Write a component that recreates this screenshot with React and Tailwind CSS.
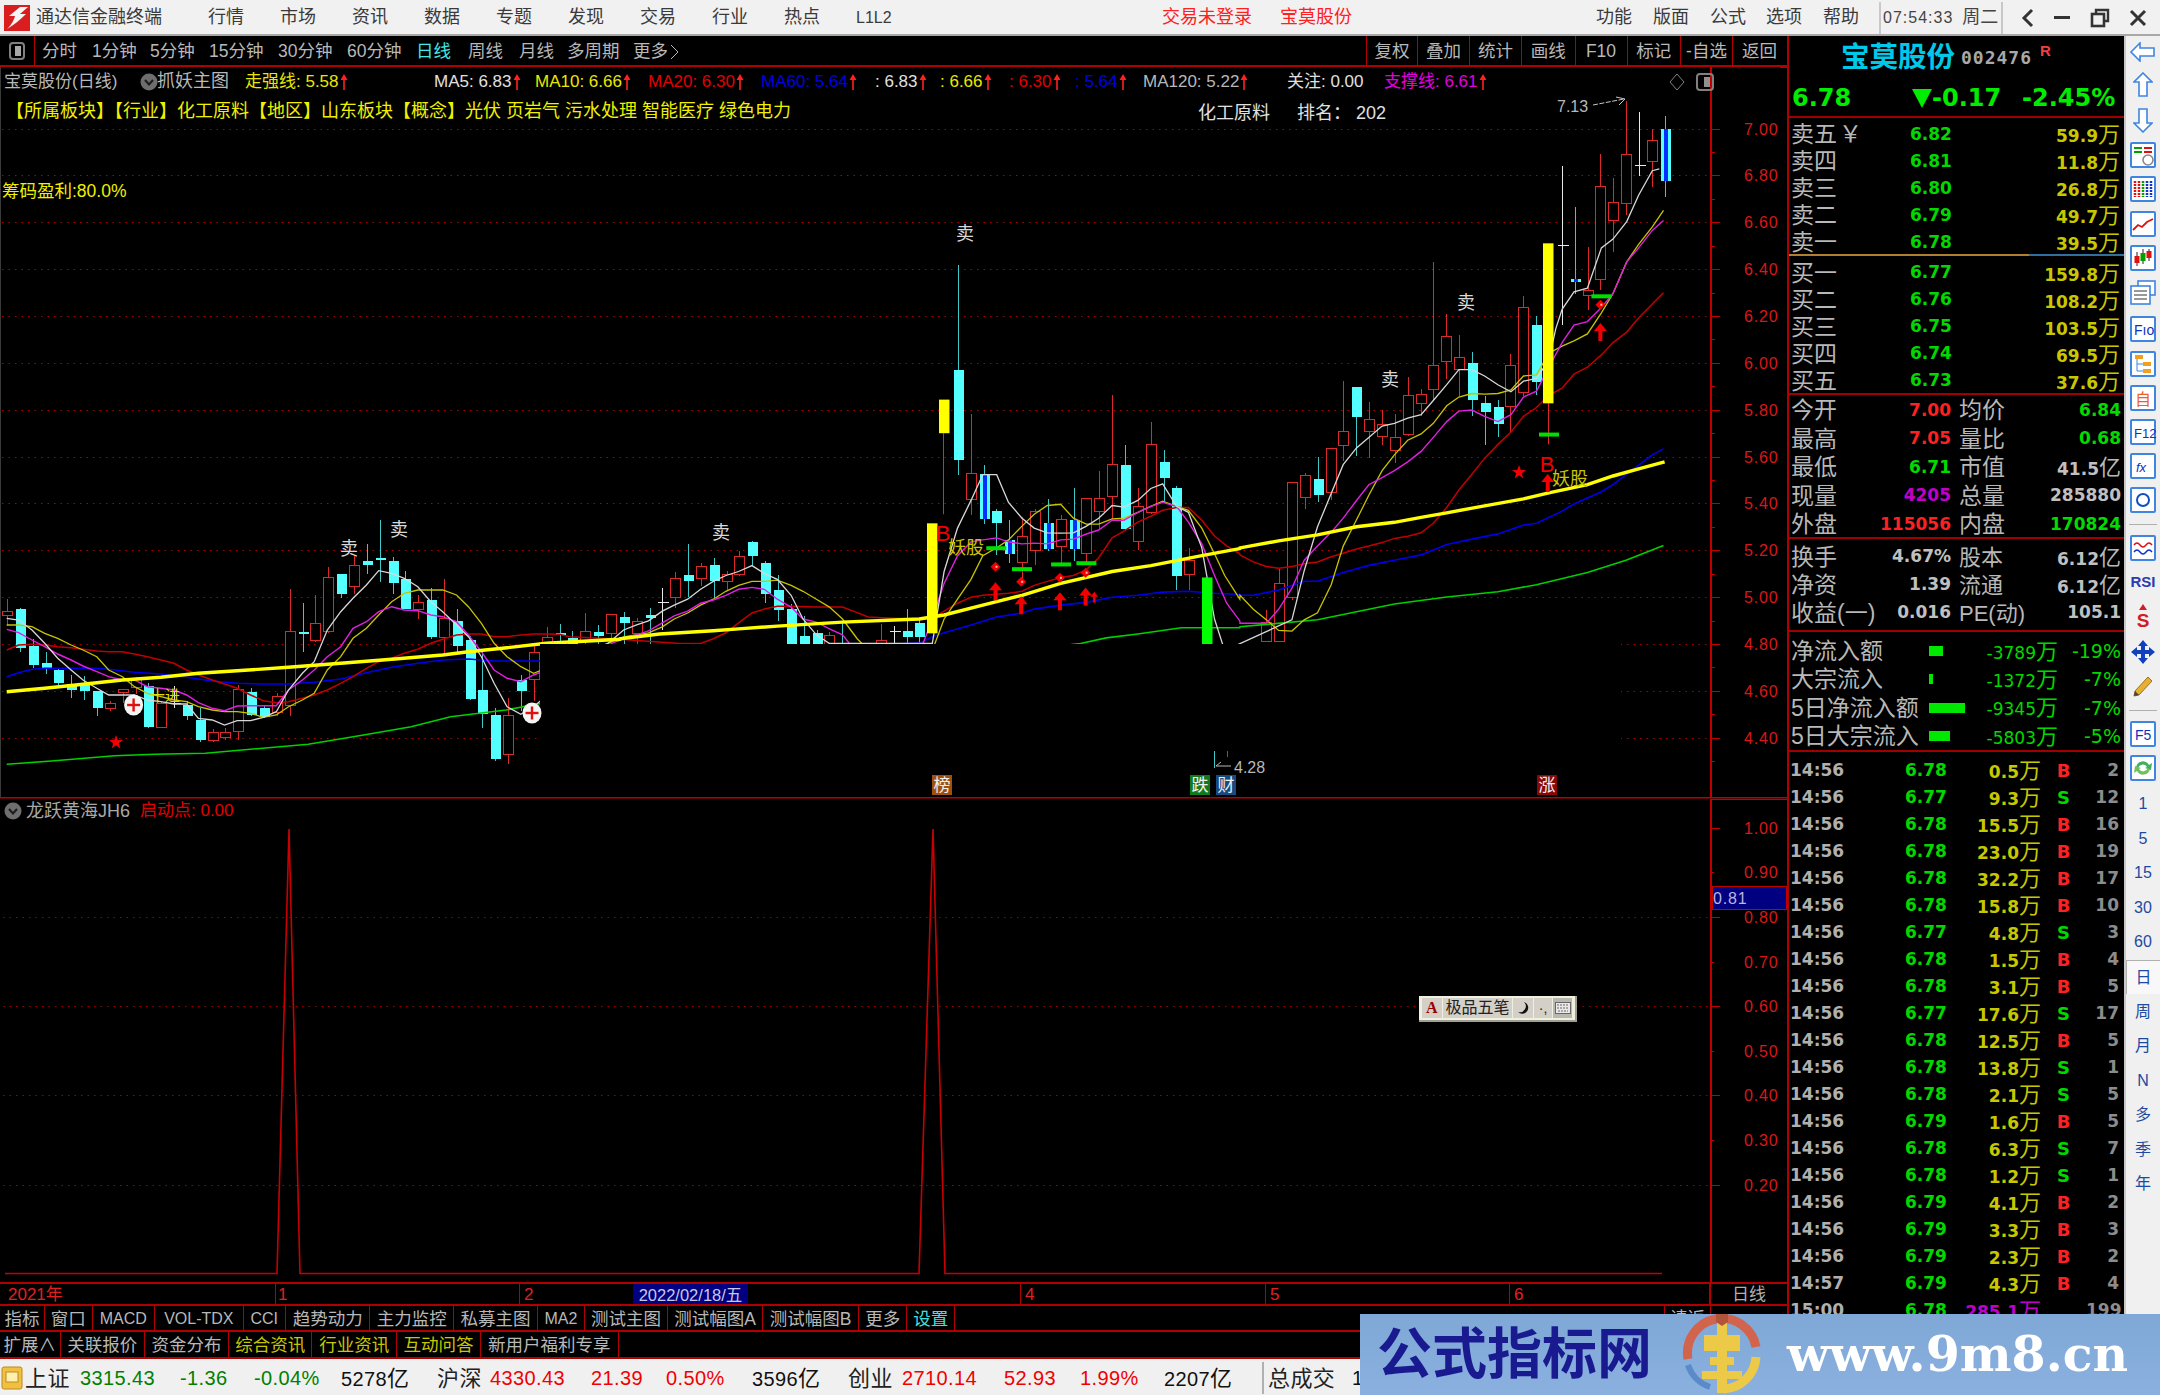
import React from 'react';

const z8 = (x, y) => [x / 2.53, 480 + y / 3];
const z9 = (x, y) => [620 + x / 2.53, 200 + y / 2.53];
const z10 = (x, y) => [1240 + x / 2.85, 90 + y / 2.85];

const c8 = [
  [0,'r',355,393,405,435],[1,'c',380,383,500,513],[2,'c',475,495,553,560],[3,'c',513,545,563,580],[4,'c',565,568,607,618],
  [5,'c',583,610,628,652],[6,'c',585,605,630,657],[7,'c',630,630,680,705],[8,'r',660,668,683,690],[9,'r',625,628,637,665],
  [10,'r',588,597,620,640],[11,'c',605,615,738,740],[12,'r',660,668,740,742],[13,'w',615,668,668,680],[14,'c',660,672,706,718],
  [15,'c',680,716,778,783],[16,'r',745,755,780,783],[17,'r',742,755,770,778],[18,'r',612,628,752,778],[19,'c',620,632,703,705],
  [20,'c',672,680,708,712],[21,'r',635,647,695,705],[22,'r',325,452,675,705],[23,'c',365,452,454,512],[24,'r',343,430,480,482],
  [25,'r',258,290,452,455],[26,'c',280,280,338,350],[27,'r',225,255,318,338],[28,'c',190,240,252,280],[29,'c',118,232,238,302],
  [30,'c',228,240,305,338],[31,'c',270,295,383,385],[32,'r',343,367,387,413],[33,'c',320,357,468,475],[34,'r',293,415,472,520],
  [35,'c',385,420,495,515],[36,'c',465,478,653,657],[37,'c',510,627,700,742],[38,'c',680,703,833,840],[39,'r',650,705,822,850],
  [40,'c',582,597,630,690],[41,'r',490,515,597,660],[42,'r',437,470,520,540],[43,'c',428,457,459,540],[44,'c',450,470,540,560],
  [45,'r',397,453,480,540],[46,'c',432,452,465,540],[47,'r',402,402,460,540],
];
const c9 = [
  [48,'c',1040,1052,1068,1120],[49,'r',1055,1065,1095,1125],[50,'c',1030,1048,1056,1125],[51,'w',978,1017,1017,1085],[52,'r',938,957,1005,1030],
  [53,'c',868,945,962,1003],[54,'r',915,927,957,975],[55,'c',903,922,962,1005],[56,'r',935,945,965,985],[57,'r',885,900,945,950],
  [58,'c',860,862,897,920],[59,'c',912,915,995,1018],[60,'c',945,985,1035,1062],[61,'c',1020,1032,1140,1150],[62,'c',1050,1100,1140,1150],
  [63,'c',1085,1092,1140,1150],[64,'r',1090,1100,1140,1150],[65,'c',1062,1120,1140,1150],[68,'r',1070,1112,1140,1150],[69,'w',1075,1090,1090,1125],
  [70,'c',1032,1088,1103,1125],[71,'c',1058,1068,1103,1125],[74,'c',163,428,655,692],[75,'r',540,690,757,795],
  [76,'b',668,690,805,817],[77,'c',778,785,815,895],[78,'b',808,857,893,915],[79,'r',800,850,917,960],[80,'r',780,787,885,920],
  [81,'b',755,815,880,885],[82,'r',795,808,875,917],[83,'b',725,808,880,912],[84,'r',755,755,893,920],[85,'r',682,755,787,830],
  [86,'r',492,668,748,805],[87,'c',618,668,830,832],[88,'r',725,775,862,882],[89,'r',558,618,790,792],[90,'c',630,660,700,760],
  [91,'c',720,725,950,985],[92,'r',877,912,945,985],
];
const c10 = [
  [98,'r',1480,1515,1570,1570],[99,'r',1362,1405,1570,1570],[100,'r',1118,1118,1445,1450],[101,'r',1088,1097,1160,1190],[102,'c',1043,1105,1150,1170],
  [103,'r',1020,1020,1145,1165],[104,'r',827,972,1012,1055],[105,'c',843,843,928,1040],[106,'r',885,938,972,1045],[107,'r',908,952,985,1008],
  [108,'r',920,990,1025,1060],[109,'r',815,870,980,983],[110,'r',850,867,892,925],[111,'r',488,785,852,880],[112,'r',635,700,772,820],
  [113,'r',695,760,795,868],[114,'c',745,775,880,925],[115,'c',868,890,915,1010],[116,'c',882,900,948,985],[117,'r',750,785,902,972],
  [118,'r',585,618,860,870],[119,'c',642,668,828,865],[121,'w',215,442,442,668],[122,'b',330,537,543,578],[123,'r',445,570,585,625],
  [124,'r',180,275,538,568],[125,'r',248,318,370,458],[126,'r',28,182,322,352],[127,'w',60,215,215,243],[128,'r',108,143,203,275],[129,'b',72,107,257,303],
];

const white = [
  ...[[17,415],[47,420],[81,450],[113,490],[146,535],[180,570],[210,600],[245,625],[275,645],[310,645],[340,645],[373,660],[407,665],[440,672],[472,672],[502,715],[537,720],[568,735],[600,722],[634,722],[666,712],[699,695],[730,630],[765,580],[795,545],[828,450],[862,395],[893,355],[927,315],[958,272],[991,280],[1023,295],[1057,320],[1090,365],[1120,395],[1155,435],[1185,470],[1218,530],[1250,610],[1283,680],[1318,703],[1350,680]].map(p => z8(...p)),
  ...[[9,1088],[42,1075],[72,1065],[107,1040],[137,1025],[171,1010],[204,985],[236,965],[268,950],[300,940],[334,925],[365,945],[398,960],[433,1000],[463,1060],[497,1100],[530,1122],[790,1122],[820,940],[854,830],[888,760],[918,695],[953,695],[983,765],[1017,805],[1048,830],[1081,842],[1115,843],[1147,842],[1180,825],[1211,805],[1245,773],[1275,777],[1310,760],[1343,730],[1373,718],[1408,775],[1438,790],[1472,880],[1504,1060],[1530,1140]].map(p => z9(...p)),
  ...[[148,1510],[183,1370],[221,1245],[260,1150],[294,1068],[332,1020],[367,990],[405,958],[440,950],[478,935],[516,925],[551,885],[589,840],[624,797],[661,797],[697,815],[735,840],[772,860],[808,830],[845,822],[880,770],[900,680],[918,625],[952,575],[990,565],[1030,450],[1063,425],[1102,375],[1136,300],[1175,230],[1195,225]].map(p => z10(...p)),
];
const yellow = [
  ...[[17,435],[47,435],[81,440],[113,460],[146,475],[180,495],[210,510],[245,530],[275,570],[310,590],[340,620],[373,640],[407,650],[440,660],[472,665],[502,680],[537,690],[568,695],[600,695],[634,700],[666,712],[699,705],[730,680],[765,660],[795,640],[828,570],[862,530],[893,475],[927,445],[958,405],[991,365],[1023,340],[1057,330],[1090,330],[1120,330],[1155,345],[1185,380],[1218,430],[1250,490],[1283,530],[1318,560],[1350,580]].map(p => z8(...p)),
  ...[[9,1105],[72,1095],[107,1080],[137,1060],[171,1045],[204,1025],[236,1010],[268,990],[300,975],[334,965],[365,965],[398,962],[433,975],[463,990],[497,1010],[530,1030],[563,1060],[600,1110],[630,1140],[790,1140],[820,1060],[854,1010],[888,960],[918,900],[953,880],[983,860],[1017,825],[1048,795],[1081,773],[1115,770],[1147,805],[1180,820],[1211,820],[1245,807],[1275,805],[1310,790],[1343,775],[1373,762],[1408,775],[1438,785],[1472,830],[1504,895],[1530,950],[1568,1010]].map(p => z9(...p)),
  ...[[0,1440],[38,1480],[75,1510],[110,1540],[148,1542],[183,1510],[221,1490],[260,1410],[294,1300],[332,1225],[367,1155],[405,1085],[440,1040],[478,998],[516,980],[551,950],[589,900],[624,875],[661,865],[697,867],[735,865],[772,855],[808,815],[845,812],[880,750],[918,730],[952,715],[990,695],[1030,635],[1063,580],[1102,490],[1136,440],[1175,390],[1207,343]].map(p => z10(...p)),
];
const magenta = [
  ...[[17,448],[47,458],[81,480],[113,500],[146,522],[180,540],[210,558],[245,575],[275,590],[310,600],[340,600],[373,620],[407,625],[440,630],[472,645],[502,668],[537,685],[568,692],[600,678],[634,677],[666,677],[699,677],[730,630],[765,600],[795,570],[828,530],[862,500],[893,445],[927,425],[958,395],[991,380],[1023,390],[1057,392],[1090,405],[1120,410],[1155,425],[1185,465],[1218,515],[1250,570],[1283,595],[1318,605],[1350,585]].map(p => z8(...p)),
  ...[[9,1110],[42,1100],[72,1090],[107,1070],[137,1052],[171,1040],[204,1020],[236,1012],[268,1000],[300,985],[334,980],[365,985],[398,1010],[433,1030],[463,1060],[497,1068],[530,1085],[563,1100],[595,1140],[760,1140],[790,1060],[820,970],[854,900],[888,865],[918,860],[953,855],[983,865],[1017,870],[1048,868],[1081,870],[1115,860],[1147,858],[1180,845],[1211,835],[1245,810],[1275,810],[1310,790],[1343,775],[1373,765],[1408,775],[1438,815],[1472,870],[1504,950],[1535,1020],[1568,1065]].map(p => z9(...p)),
  ...[[0,1520],[75,1520],[110,1480],[148,1420],[183,1340],[221,1300],[260,1260],[294,1220],[332,1170],[367,1125],[405,1105],[440,1085],[478,1060],[516,1030],[551,990],[589,945],[624,915],[661,912],[697,930],[735,945],[772,925],[808,875],[845,858],[880,790],[918,720],[952,670],[990,660],[1030,620],[1063,580],[1102,490],[1136,450],[1175,400],[1207,372]].map(p => z10(...p)),
];
const red = [
  ...[[17,510],[47,495],[81,493],[113,495],[146,500],[180,503],[210,508],[245,513],[275,515],[310,515],[340,522],[373,530],[407,540],[440,550],[472,570],[502,585],[537,600],[568,612],[600,625],[634,645],[666,662],[699,668],[730,665],[765,655],[795,645],[828,630],[862,610],[893,590],[927,565],[958,545],[991,535],[1023,520],[1057,508],[1090,490],[1120,478],[1155,465],[1185,462],[1218,462],[1250,470],[1283,470],[1318,465],[1350,462],[1382,462],[1415,463],[1440,470],[1568,478]].map(p => z8(...p)),
  ...[[150,1122],[204,1122],[236,1110],[268,1095],[300,1070],[334,1045],[365,1035],[398,1028],[433,1028],[497,1030],[563,1030],[595,1042],[628,1055],[690,1058],[757,1060],[790,1058],[820,1040],[854,1020],[888,1005],[918,1000],[983,995],[1017,990],[1048,975],[1081,965],[1115,955],[1147,950],[1180,935],[1211,905],[1245,855],[1275,838],[1310,815],[1343,800],[1373,785],[1408,778],[1438,778],[1472,810],[1504,850],[1535,875],[1568,895]].map(p => z9(...p)),
  ...[[0,1325],[38,1345],[75,1358],[110,1363],[148,1358],[183,1350],[221,1345],[260,1330],[294,1320],[332,1308],[367,1300],[405,1290],[440,1278],[478,1272],[516,1262],[551,1235],[589,1190],[624,1140],[661,1095],[697,1050],[735,1010],[772,975],[808,930],[845,905],[880,870],[918,850],[952,810],[990,790],[1030,755],[1063,720],[1102,690],[1136,650],[1175,610],[1207,578]].map(p => z10(...p)),
];
const blue = [
  ...[[17,590],[47,578],[81,568],[113,565],[180,565],[245,565],[275,568],[340,577],[407,582],[472,592],[537,603],[600,610],[666,612],[730,612],[795,607],[862,597],[927,578],[991,562],[1057,550],[1120,540],[1185,537],[1250,543],[1318,543],[1360,543]].map(p => z8(...p)),
  ...[[660,1125],[760,1120],[790,1105],[820,1095],[888,1075],[953,1055],[1017,1045],[1048,1035],[1115,1025],[1180,1018],[1245,1005],[1310,1000],[1373,992],[1438,990],[1504,995],[1568,998]].map(p => z9(...p)),
  ...[[0,1440],[38,1440],[110,1425],[183,1400],[221,1400],[294,1375],[367,1355],[440,1340],[516,1325],[589,1295],[661,1280],[735,1265],[808,1240],[845,1235],[918,1200],[952,1180],[1030,1145],[1063,1125],[1102,1095],[1175,1040],[1207,1023]].map(p => z10(...p)),
];
const thick = [
  ...[[17,635],[113,625],[210,613],[310,600],[407,592],[502,580],[600,572],[730,562],[862,550],[991,538],[1120,525],[1185,515],[1283,503],[1382,490],[1568,478]].map(p => z8(...p)),
  ...[[0,1110],[100,1098],[236,1090],[300,1085],[398,1078],[563,1068],[757,1060],[820,1050],[918,1025],[1017,1000],[1115,970],[1245,940],[1343,925],[1472,900],[1568,882]].map(p => z9(...p)),
  ...[[0,1305],[110,1285],[221,1268],[332,1245],[440,1232],[516,1218],[589,1205],[697,1185],[808,1165],[880,1148],[990,1125],[1063,1100],[1136,1080],[1210,1060]].map(p => z10(...p)),
];
const green = [
  ...[[17,853],[130,843],[290,827],[390,823],[520,820],[650,806],[780,793],[920,765],[1040,740],[1140,710],[1280,690],[1360,672]].map(p => z8(...p)),
  ...[[1100,1130],[1165,1122],[1230,1108],[1310,1098],[1420,1082],[1568,1082]].map(p => z9(...p)),
  ...[[0,1530],[221,1510],[440,1465],[589,1445],[735,1430],[845,1410],[990,1375],[1100,1340],[1207,1298]].map(p => z10(...p)),
];

const pts = a => a.map(p => p[0].toFixed(1) + ',' + p[1].toFixed(1)).join(' ');
const cx = i => Math.round(7 + 12.85 * i) + 0.5;

function Candle({ d, z }) {
  const [i, k, hi, top, bot, lo] = d;
  const x = cx(i);
  const Y = v => Math.round(z(0, v)[1]) + 0.5;
  const [yh, yt, yb, yl] = [Y(hi), Y(top), Y(bot), Y(lo)];
  if (k === 'r') return (
    <g stroke="#dc2a2a" fill="none" shapeRendering="crispEdges">
      <line x1={x} x2={x} y1={yh} y2={yt} />
      <line x1={x} x2={x} y1={yb} y2={yl} />
      <rect x={x - 5} y={yt} width={10} height={Math.max(yb - yt, 1)} fill="#000" />
    </g>
  );
  if (k === 'w') return (
    <g stroke="#e8e8e8" shapeRendering="crispEdges">
      <line x1={x} x2={x} y1={yh} y2={yl} />
      <line x1={x - 5} x2={x + 6} y1={yt} y2={yt} />
    </g>
  );
  return (
    <g shapeRendering="crispEdges">
      <line x1={x} x2={x} y1={yh} y2={yl} stroke="#3ec8c8" />
      <rect x={x - 5} y={yt} width={10.5} height={Math.max(yb - yt, 2)} fill="#54ffff" />
      {k === 'b' && <rect x={x - 2} y={yt} width={4} height={Math.max(yb - yt, 2)} fill="#0030ff" />}
    </g>
  );
}

const Arrow = ({ x, y, s = 1 }) => (
  <polygon
    points={`${x},${y - 9 * s} ${x + 6.5 * s},${y - 1 * s} ${x + 2 * s},${y - 1 * s} ${x + 2 * s},${y + 9 * s} ${x - 2 * s},${y + 9 * s} ${x - 2 * s},${y - 1 * s} ${x - 6.5 * s},${y - 1 * s}`}
    fill="#f00000"
  />
);
const Diamond = ({ x, y }) => (
  <g>
    <polygon points={`${x},${y - 5} ${x + 5},${y} ${x},${y + 5} ${x - 5},${y}`} fill="#f00000" />
    <rect x={x} y={y - 1} width={2} height={2} fill="#ffb0b0" />
  </g>
);
const Star = ({ x, y }) => (
  <polygon
    points={`${x},${y - 7} ${x + 1.8},${y - 2} ${x + 7},${y - 2} ${x + 2.8},${y + 1.2} ${x + 4.3},${y + 6.5} ${x},${y + 3.3} ${x - 4.3},${y + 6.5} ${x - 2.8},${y + 1.2} ${x - 7},${y - 2} ${x - 1.8},${y - 2}`}
    fill="#f00000"
  />
);
const Plus = ({ x, y }) => (
  <g>
    <ellipse cx={x} cy={y} rx={9.5} ry={10.5} fill="#f4f4f4" />
    <rect x={x - 6.5} y={y - 1.2} width={13} height={2.4} fill="#e01010" />
    <rect x={x - 1.2} y={y - 6.5} width={2.4} height={13} fill="#e01010" />
  </g>
);
const Badge = ({ x, t, bg }) => (
  <g>
    <rect x={x - 10} y={775} width={20} height={20} fill={bg} />
    <text x={x} y={791} textAnchor="middle" fontSize="17" fill="#f0f0f0">{t}</text>
  </g>
);

function MainChart() {
  const grid = [];
  for (let k = 0; k < 14; k++) grid.push(7 - k * 0.2);
  const yp = p => 128.6 + (7 - p) * 234.3;
  const flat = [z9(952, 881), z9(1017, 934), z9(1116, 922), z9(1180, 919), z10(1030, 588)];
  return (
    <svg className="absolute inset-0" width="1787" height="730" viewBox="0 67 1787 730">
      <line x1="0.5" x2="0.5" y1="67" y2="797" stroke="#3a3a3a" />
      {grid.map(p => (
        <line key={p} x1="2" x2="1710" y1={Math.round(yp(p)) + 0.5} y2={Math.round(yp(p)) + 0.5} stroke="#b00000" strokeDasharray="1.5 5" />
      ))}
      {c8.map(d => <Candle key={d[0]} d={d} z={z8} />)}
      {c9.map(d => <Candle key={d[0]} d={d} z={z9} />)}
      {c10.map(d => <Candle key={d[0]} d={d} z={z10} />)}
      <polyline points={pts(green)} fill="none" stroke="#00d000" strokeWidth="1.6" />
      <polyline points={pts(blue)} fill="none" stroke="#0000e8" strokeWidth="1.6" />
      <polyline points={pts(red)} fill="none" stroke="#c00000" strokeWidth="1.5" />
      <polyline points={pts(yellow)} fill="none" stroke="#c8c400" strokeWidth="1.3" />
      <polyline points={pts(magenta)} fill="none" stroke="#e020e0" strokeWidth="1.4" />
      <polyline points={pts(white)} fill="none" stroke="#d8d8d8" strokeWidth="1.3" />
      <polyline points={pts(thick)} fill="none" stroke="#ffff00" strokeWidth="3.4" />
      <rect x={927} y={z9(0, 818)[1]} width={10.5} height={110} fill="#ffff00" />
      <line x1="943.5" x2="943.5" y1={z9(0, 590)[1]} y2={z9(0, 795)[1]} stroke="#dc2a2a" />
      <rect x={939} y={z9(0, 505)[1]} width={10.5} height={33.6} fill="#ffff00" />
      <rect x={1202} y={z9(0, 955)[1]} width={10.5} height={70} fill="#00ff00" />
      <line x1="1548.5" x2="1548.5" y1={z10(0, 892)[1]} y2={z10(0, 1010)[1]} stroke="#dc2a2a" />
      <rect x={1543} y={z10(0, 437)[1]} width={10.5} height={160} fill="#ffff00" />
      {flat.map((p, i) => <rect key={i} x={p[0] - 10} y={p[1] - 2} width={20} height={4} fill="#00e000" />)}
      <rect x={1539} y={z10(0, 982)[1] - 2} width={20} height={4} fill="#00e000" />
      <rect x="540" y="644" width="1081" height="107" fill="#000" />
      {[[349, 555], [399, 536], [965, 240], [721, 539], [1466, 309], [1390, 386]].map((p, i) => (
        <text key={i} x={p[0]} y={p[1]} textAnchor="middle" fontSize="18" fill="#d8d8d8">卖</text>
      ))}
      <text x="150" y="701" fontSize="15" fill="#e0e000">十进</text>
      <Plus x={133.6} y={705} />
      <Plus x={532} y={713} />
      <Star x={116} y={742} />
      <Star x={1519} y={472} />
      <text x="943" y="541" textAnchor="middle" fontSize="22" fill="#f00000">B</text>
      <text x="948" y="554" fontSize="18" fill="#c8c800">妖股</text>
      <text x="1547" y="472" textAnchor="middle" fontSize="22" fill="#f00000">B</text>
      <text x="1552" y="485" fontSize="18" fill="#c8c800">妖股</text>
      {[z9(950, 928), z9(1015, 966), z9(1113, 956), z9(1178, 943), z10(1027, 612)].map((p, i) => <Diamond key={i} x={p[0]} y={p[1]} />)}
      {[z9(950, 990), z9(1015, 1025), z9(1113, 1015), z9(1178, 1003), z10(1027, 690), z10(877, 1120)].map((p, i) => <Arrow key={i} x={p[0]} y={p[1]} />)}
      <Arrow x={z9(1200, 0)[0]} y={z9(0, 1005)[1]} s={0.6} />
      <text x="1557" y="112" fontSize="16" fill="#b8b8b8">7.13</text>
      <polyline points="1593,105 1624,99" fill="none" stroke="#c8c8c8" strokeDasharray="5 1.5" />
      <polyline points="1616,97 1625,99 1619,105" fill="none" stroke="#c8c8c8" />
      <line x1="1214.5" x2="1214.5" y1="751" y2="768" stroke="#3ec8c8" />
      <line x1="1227.5" x2="1227.5" y1="751" y2="757" stroke="#dc2a2a" />
      <polyline points="1231,766 1216,766 1221,762" fill="none" stroke="#b8b8b8" />
      <text x="1234" y="773" fontSize="16" fill="#b8b8b8">4.28</text>
      <Badge x={942} t="榜" bg="#a0500e" />
      <Badge x={1200} t="跌" bg="#137a1c" />
      <Badge x={1226} t="财" bg="#174a80" />
      <Badge x={1547} t="涨" bg="#880808" />
      <line x1="1711" x2="1711" y1="67" y2="797" stroke="#c00000" strokeWidth="2" />
      {grid.map(p => (
        <g key={p}>
          <line x1="1711" x2="1720" y1={Math.round(yp(p)) + 0.5} y2={Math.round(yp(p)) + 0.5} stroke="#c00000" />
          <line x1="1711" x2="1715" y1={Math.round(yp(p - 0.1)) + 0.5} y2={Math.round(yp(p - 0.1)) + 0.5} stroke="#c00000" />
          <text x="1744" y={yp(p) + 6} fontSize="16" letterSpacing="0.8" fill="#d81818">{p.toFixed(2)}</text>
        </g>
      ))}
      <line x1="1780" x2="1787" y1="67.5" y2="67.5" stroke="#c00000" />
    </svg>
  );
}

function SubChart() {
  const vals = [1, 0.9, 0.8, 0.7, 0.6, 0.5, 0.4, 0.3, 0.2];
  const yv = v => 827.7 + (1 - v) * 446;
  return (
    <svg className="absolute inset-0" width="1787" height="485" viewBox="0 797 1787 485">
      {[0.8, 0.6, 0.4, 0.2].map(v => (
        <line key={v} x1="3" x2="1710" y1={Math.round(yv(v)) + 0.5} y2={Math.round(yv(v)) + 0.5} stroke="#a00000" strokeDasharray="1.5 5" />
      ))}
      <polyline points="5,1273.5 277,1273.5 289,829 300,1273.5 919,1273.5 933,829 945,1273.5 1662,1273.5" fill="none" stroke="#c80000" strokeWidth="1.6" />
      <line x1="0" x2="1787" y1="797.5" y2="797.5" stroke="#c00000" strokeWidth="2" />
      <line x1="1711" x2="1711" y1="799" y2="1282" stroke="#c00000" strokeWidth="2" />
      <line x1="1711" x2="1787" y1="799.5" y2="799.5" stroke="#c00000" />
      {vals.map((v, i) => (
        <g key={v}>
          <line x1="1711" x2={i % 2 ? 1714 : 1720} y1={Math.round(yv(v)) + 0.5} y2={Math.round(yv(v)) + 0.5} stroke="#c00000" />
          <text x="1744" y={yv(v) + 6} fontSize="16" letterSpacing="0.8" fill="#d81818">{v.toFixed(2)}</text>
        </g>
      ))}
      <rect x="1712.5" y="886.5" width="74" height="23" fill="#000080" stroke="#c00000" />
      <text x="1713" y="904" fontSize="16" letterSpacing="0.8" fill="#b8b8e0">0.81</text>
    </svg>
  );
}

const UpTick = ({ c = '#ff2020' }) => (
  <svg width="8" height="17" viewBox="0 0 8 17" className="ml-[1px] shrink-0">
    <path d="M4 1 L7.5 7 H4.8 V17 H3.2 V7 H0.5 Z" fill={c} />
  </svg>
);
const Chev = () => (
  <svg width="18" height="18" viewBox="0 0 18 18" className="shrink-0">
    <circle cx="9" cy="9" r="8.5" fill="#6e6e6e" />
    <path d="M5 7 L9 11.5 L13 7" stroke="#1c1c1c" strokeWidth="2" fill="none" />
  </svg>
);

const tf = [['分时', 50], ['1分钟', 58], ['5分钟', 59], ['15分钟', 69], ['30分钟', 69], ['60分钟', 69], ['日线', 52], ['周线', 51], ['月线', 48], ['多周期', 66]];
const rightBtns = [['复权', 51], ['叠加', 52], ['统计', 52], ['画线', 53.5], ['F10', 52], ['标记', 53.5], ['-自选', 52], ['返回', 54]];
const maRow = [
  ['MA5: 6.83', 101, 'text-[#e0e0e0]'], ['MA10: 6.66', 113, 'text-[#e8e800]'], ['MA20: 6.30', 113, 'text-[#e00000]'],
  ['MA60: 5.64', 114, 'text-[#0000e0]'], [': 6.83', 65, 'text-[#e0e0e0]'], [': 6.66', 69, 'text-[#e8e800]'],
  [': 6.30', 66, 'text-[#e00000]'], [': 5.64', 68, 'text-[#0000e0]'], ['MA120: 5.22', 144, 'text-[#b8b8b8]'],
];
const tabs1 = [['指标', 45], ['窗口', 47.5], ['MACD', 62.5], ['VOL-TDX', 88.6], ['CCI', 42.4], ['趋势动力', 84.5], ['主力监控', 83.5], ['私募主图', 84], ['MA2', 47], ['测试主图', 83], ['测试幅图A', 95], ['测试幅图B', 96], ['更多', 48.5], ['设置', 47.5, 'text-[#40e0e0]']];
const tabs2 = [['扩展∧', 60.6], ['关联报价', 84.4], ['资金分布', 84], ['综合资讯', 83.5, 'text-[#c8c800]'], ['行业资讯', 84.5, 'text-[#c8c800]'], ['互动问答', 84, 'text-[#c8c800]'], ['新用户福利专享', 137.6]];
const sells = [['卖五', '6.82', '59.9'], ['卖四', '6.81', '11.8'], ['卖三', '6.80', '26.8'], ['卖二', '6.79', '49.7'], ['卖一', '6.78', '39.5']];
const buys = [['买一', '6.77', '159.8'], ['买二', '6.76', '108.2'], ['买三', '6.75', '103.5'], ['买四', '6.74', '69.5'], ['买五', '6.73', '37.6']];
const R = 'text-[#ff2020]', G = 'text-[#00dc00]', W = 'text-[#c0c0c0]', M = 'text-[#c000c8]';
const stats1 = [
  ['今开', '7.00', R, '均价', '6.84', G], ['最高', '7.05', R, '量比', '0.68', G], ['最低', '6.71', G, '市值', '41.5', W, '亿'],
  ['现量', '4205', M, '总量', '285880', W], ['外盘', '115056', R, '内盘', '170824', G],
];
const stats2 = [['换手', '4.67%', W, '股本', '6.12', W, '亿'], ['净资', '1.39', W, '流通', '6.12', W, '亿'], ['收益(一)', '0.016', W, 'PE(动)', '105.1', W]];
const flows = [['净流入额', 14, '-3789', '-19%'], ['大宗流入', 4, '-1372', '-7%'], ['5日净流入额', 36, '-9345', '-7%'], ['5日大宗流入', 21, '-5803', '-5%']];
const trades = [
  ['14:56', '6.78', '0.5', 'B', '2'], ['14:56', '6.77', '9.3', 'S', '12'], ['14:56', '6.78', '15.5', 'B', '16'], ['14:56', '6.78', '23.0', 'B', '19'],
  ['14:56', '6.78', '32.2', 'B', '17'], ['14:56', '6.78', '15.8', 'B', '10'], ['14:56', '6.77', '4.8', 'S', '3'], ['14:56', '6.78', '1.5', 'B', '4'],
  ['14:56', '6.78', '3.1', 'B', '5'], ['14:56', '6.77', '17.6', 'S', '17'], ['14:56', '6.78', '12.5', 'B', '5'], ['14:56', '6.78', '13.8', 'S', '1'],
  ['14:56', '6.78', '2.1', 'S', '5'], ['14:56', '6.79', '1.6', 'B', '5'], ['14:56', '6.78', '6.3', 'S', '7'], ['14:56', '6.78', '1.2', 'S', '1'],
  ['14:56', '6.79', '4.1', 'B', '2'], ['14:56', '6.79', '3.3', 'B', '3'], ['14:56', '6.79', '2.3', 'B', '2'], ['14:57', '6.79', '4.3', 'B', '4'],
  ['15:00', '6.78', '285.1', '', '199'],
];
const status = [
  ['3315.43', 100, 'text-[#008000]'], ['-1.36', 74, 'text-[#008000]'], ['-0.04%', 87, 'text-[#008000]'], ['5278', 96, 'text-[#111]', '亿'], ['沪深', 53, 'text-[#222] text-[22px]'],
  ['4330.43', 101, 'text-[#f00000]'], ['21.39', 75, 'text-[#f00000]'], ['0.50%', 86, 'text-[#f00000]'], ['3596', 96, 'text-[#111]', '亿'], ['创业', 54, 'text-[#222] text-[22px]'],
  ['2710.14', 102, 'text-[#f00000]'], ['52.93', 76, 'text-[#f00000]'], ['1.99%', 84, 'text-[#f00000]'], ['2207', 98, 'text-[#111]', '亿'],
];

const num = "font-['DejaVu_Sans','Noto_Sans_CJK_SC',sans-serif] font-bold text-[17px]";

const Frame = ({ children }) => (
  <svg width="28" height="28" viewBox="0 0 28 28">
    <rect x="2" y="2" width="24" height="24" fill="#fff" stroke="#3f86e0" strokeWidth="2" rx="1" />
    {children}
  </svg>
);
const railIcons = [
  { h: 31, el: <svg width="26" height="20" viewBox="0 0 26 20"><path d="M1 10 L10 1 V6 H24 V14 H10 V19 Z" fill="#fff" stroke="#3f86e0" strokeWidth="1.6" /></svg> },
  { h: 35, el: <svg width="20" height="26" viewBox="0 0 20 26"><path d="M10 1 L19 10 H14 V24 H6 V10 H1 Z" fill="#fff" stroke="#3f86e0" strokeWidth="1.6" /></svg> },
  { h: 36, el: <svg width="20" height="26" viewBox="0 0 20 26"><path d="M10 25 L19 16 H14 V2 H6 V16 H1 Z" fill="#fff" stroke="#3f86e0" strokeWidth="1.6" /></svg> },
  { h: 34, el: <Frame><path d="M5 7 H13 M5 11 H13" stroke="#00a000" strokeWidth="2" /><path d="M15 7 H23 M15 11 H23" stroke="#e01010" strokeWidth="2" /><circle cx="19" cy="19" r="5" fill="none" stroke="#888" strokeWidth="1.6" /></Frame> },
  { h: 34, el: <Frame><path d="M6 6 V22 M10 6 V22" stroke="#e01010" strokeWidth="2.5" strokeDasharray="2 1" /><path d="M14 6 V22" stroke="#00a000" strokeWidth="2.5" strokeDasharray="2 1" /><path d="M18 6 V22 M22 6 V22" stroke="#1030d0" strokeWidth="2.5" strokeDasharray="2 1" /></Frame> },
  { h: 35, el: <Frame><path d="M4 20 L9 15 L13 17 L18 12 L24 9" fill="none" stroke="#e01010" strokeWidth="1.8" /></Frame> },
  { h: 34, el: <Frame><path d="M8 8 V22 M14 5 V20 M20 5 V17" stroke="#222" /><rect x="5.5" y="12" width="5" height="7" fill="#e01010" /><rect x="11.5" y="9" width="5" height="8" fill="#00a000" /><rect x="17.5" y="7" width="5" height="7" fill="#e01010" /></Frame> },
  { h: 36, el: <svg width="28" height="28" viewBox="0 0 28 28"><rect x="9" y="2" width="17" height="14" fill="#fff" stroke="#3f86e0" strokeWidth="1.6" /><rect x="2" y="7" width="19" height="18" fill="#fff" stroke="#3f86e0" strokeWidth="1.6" /><path d="M5 12 H18 M5 16 H18 M5 20 H18" stroke="#777" strokeWidth="1.6" /></svg> },
  { h: 35, el: <Frame><text x="5" y="20" fontSize="14" fill="#1030c0">Fıo</text></Frame> },
  { h: 35, el: <Frame><rect x="6" y="5" width="8" height="4" fill="#f0a020" /><rect x="14" y="12" width="8" height="4" fill="#f0a020" /><rect x="14" y="19" width="8" height="4" fill="#f0a020" /><path d="M8 9 V21 H14 M8 14 H14" fill="none" stroke="#3f86e0" /></Frame> },
  { h: 34, el: <Frame><text x="6" y="21" fontSize="16" fill="#f06020">自</text></Frame> },
  { h: 34, el: <Frame><text x="5" y="20" fontSize="13" fill="#1030c0">F12</text></Frame> },
  { h: 34, el: <Frame><text x="7" y="20" fontSize="13" fontStyle="italic" fill="#1030c0">fx</text></Frame> },
  { h: 34, el: <Frame><circle cx="14" cy="14" r="6" fill="none" stroke="#1050c0" strokeWidth="2" /></Frame> },
  { h: 14, el: <div className="w-[28px] h-[1px] bg-[#b0b0b0]" /> },
  { h: 34, el: <Frame><path d="M5 11 q3 -4 6 0 t6 0 t6 0" fill="none" stroke="#e01010" strokeWidth="1.4" /><path d="M5 18 q3 -4 6 0 t6 0 t6 0" fill="none" stroke="#1030d0" strokeWidth="1.4" /></Frame> },
  { h: 34, el: <span className="text-[15px] font-bold text-[#2a3ab0]">RSI</span> },
  { h: 36, el: <svg width="24" height="28" viewBox="0 0 24 28"><text x="12" y="24" textAnchor="middle" fontSize="19" fontWeight="bold" fill="#d02020">S</text><path d="M12 1 L16 7 H8 Z" fill="#d02020" /></svg> },
  { h: 34, el: <svg width="26" height="26" viewBox="0 0 26 26"><path d="M13 1 L18 7 H15 V11 H19 V8 L25 13 L19 18 V15 H15 V19 H18 L13 25 L8 19 H11 V15 H7 V18 L1 13 L7 8 V11 H11 V7 H8 Z" fill="#1040c0" /></svg> },
  { h: 34, el: <svg width="24" height="24" viewBox="0 0 24 24"><path d="M4 17 L17 3 L21 7 L8 21 L3 22 Z" fill="#e8b030" stroke="#a07020" /><path d="M3 22 L4 17 L8 21 Z" fill="#444" /></svg> },
  { h: 14, el: <div className="w-[28px] h-[1px] bg-[#b0b0b0]" /> },
  { h: 34, el: <Frame><text x="6" y="20" fontSize="14" fill="#1030c0">F5</text></Frame> },
  { h: 34, el: <Frame><path d="M7 13 A7 7 0 0 1 20 11 L23 9 L22 16 L16 14 L18 13 A5 5 0 0 0 9 14 Z" fill="#40b060" /><path d="M21 15 A7 7 0 0 1 8 17 L5 19 L6 12 L12 14 L10 15 A5 5 0 0 0 19 14 Z" fill="#70c060" /></Frame> },
];
const railText = ['1', '5', '15', '30', '60', '日', '周', '月', 'N', '多', '季', '年'];

export default function App() {
  return (
    <div className="relative w-[2160px] h-[1395px] overflow-hidden bg-black flex flex-col font-['Liberation_Sans','Noto_Sans_CJK_SC',sans-serif]">
      <div className="h-[36px] shrink-0 bg-[#f1f1f1] border-b-2 border-[#a8a8a8] flex items-center pt-[1px] text-[18px] text-[#3a3a3a]">
        <svg width="26" height="26" viewBox="0 0 26 26" className="ml-[4px] mr-[6px] shrink-0">
          <rect width="26" height="26" fill="#d81e1e" />
          <path d="M3 24 C8 19 10 15 11 11 L5 11 L16 2 L24 2 L16 9 L22 9 C16 15 10 20 3 24 Z" fill="#f4f4f4" />
        </svg>
        <span className="w-[172px] shrink-0">通达信金融终端</span>
        {['行情', '市场', '资讯', '数据', '专题', '发现', '交易', '行业', '热点'].map(t => <span key={t} className="w-[72px] shrink-0">{t}</span>)}
        <span className="w-[306px] shrink-0 text-[16px]">L1L2</span>
        <span className="w-[118px] shrink-0 text-[#ff2020]">交易未登录</span>
        <span className="w-[316px] shrink-0 text-[#ff2020]">宝莫股份</span>
        {[['功能', 57], ['版面', 57], ['公式', 56], ['选项', 57], ['帮助', 56]].map(([t, w]) => <span key={t} style={{ width: w }} className="shrink-0">{t}</span>)}
        <div className="h-[32px] w-[124px] shrink-0 border-x-2 border-[#c8c8c8] flex items-center pl-[2px] text-[#444] gap-[9px]">
          <span className="text-[16px] tracking-[1px]">07:54:33</span><span className="text-[18px]">周二</span>
        </div>
        <div className="flex-1 flex items-center justify-around pl-[8px] pr-[3px]">
          <svg width="14" height="20" viewBox="0 0 14 20"><path d="M11 2 L3 10 L11 18" fill="none" stroke="#333" strokeWidth="3" /></svg>
          <svg width="16" height="4" viewBox="0 0 16 4"><rect width="16" height="3" fill="#333" /></svg>
          <svg width="20" height="20" viewBox="0 0 20 20"><path d="M6 5 V2 H18 V13 H14" fill="none" stroke="#333" strokeWidth="2.4" /><rect x="2" y="6" width="12" height="12" fill="none" stroke="#333" strokeWidth="2.6" /></svg>
          <svg width="18" height="18" viewBox="0 0 18 18"><path d="M2 2 L16 16 M16 2 L2 16" stroke="#333" strokeWidth="3" /></svg>
        </div>
      </div>

      <div className="flex h-[1323px] shrink-0">
        <div className="w-[1787px] shrink-0 flex flex-col">
          <div className="h-[31px] shrink-0 border-b-2 border-[#b00000] flex items-stretch text-[17.5px] text-[#b8b8b8]">
            <div className="w-[35px] shrink-0 border-r border-[#b00000] flex items-center justify-center">
              <svg width="16" height="18" viewBox="0 0 16 18"><rect x="1" y="1" width="14" height="16" rx="3" fill="none" stroke="#808080" strokeWidth="2" /><rect x="6" y="4" width="6" height="10" fill="#a8a8a8" /></svg>
            </div>
            <div className="w-[7px] shrink-0" />
            {tf.map(([t, w]) => <div key={t} style={{ width: w }} className={`shrink-0 pt-[2px] flex items-center ${t === '日线' ? 'text-[#40e8e8]' : ''}`}>{t}</div>)}
            <div className="w-[56px] shrink-0 pt-[2px] flex items-center gap-[2px]">更多
              <svg width="9" height="16" viewBox="0 0 9 16"><path d="M1 1 L8 8 L1 15" fill="none" stroke="#b8b8b8" /></svg>
            </div>
            <div className="flex-1" />
            <div className="w-[421px] flex shrink-0">
              {rightBtns.map(([t, w]) => <div key={t} style={{ width: w }} className="shrink-0 pt-[2px] border-l border-[#b00000] flex items-center justify-center">{t}</div>)}
            </div>
          </div>

          <div className="relative h-[730px] shrink-0">
            <MainChart />
            <div className="relative h-[29px] flex items-center text-[17px] text-[#b8b8b8]">
              <span className="pl-[4px] w-[145px] shrink-0">宝莫股份(日线)</span>
              <div className="w-[12px] shrink-0 -ml-[5px] mr-[5px]"><Chev /></div>
              <span className="w-[88px] shrink-0 text-[18px]">抓妖主图</span>
              <span className="w-[189px] shrink-0 text-[#e8e800] flex items-center">走强线: 5.58<UpTick /></span>
              {maRow.map(([t, w, c]) => <span key={t + w} style={{ width: w }} className={`shrink-0 flex items-center ${c}`}>{t}<UpTick /></span>)}
              <span className="w-[97px] shrink-0 text-[#e0e0e0]">关注: 0.00</span>
              <span className="w-[285px] shrink-0 text-[#e000e0] flex items-center">支撑线: 6.61<UpTick /></span>
              <svg width="16" height="18" viewBox="0 0 16 18" className="shrink-0 mr-[11px]"><path d="M8 1 L15 9 L8 17 L1 9 Z" fill="none" stroke="#808080" /></svg>
              <svg width="18" height="18" viewBox="0 0 18 18" className="shrink-0"><rect x="1" y="1" width="16" height="16" rx="3" fill="none" stroke="#808080" strokeWidth="2" /><rect x="8" y="4" width="6" height="10" fill="#909090" /></svg>
            </div>
            <div className="relative h-[29px] mt-[1px] flex items-center text-[18px] text-[#f0f000] pl-[6px]">
              <span className="w-[1192px] shrink-0">【所属板块】【行业】化工原料【地区】山东板块【概念】光伏 页岩气 污水处理 智能医疗 绿色电力</span>
              <span className="w-[99px] shrink-0 text-[#e0e0e0] pt-[3px]">化工原料</span>
              <span className="text-[#e0e0e0] pt-[3px]">排名： 202</span>
            </div>
            <div className="relative mt-[52px] pl-[2px] h-[26px] flex items-center text-[17.5px] text-[#f0f000]">筹码盈利:80.0%</div>
          </div>

          <div className="relative h-[485px] shrink-0">
            <SubChart />
            <div className="relative h-[26px] mt-[1px] flex items-center text-[17px] pl-[4px]">
              <Chev />
              <span className="ml-[4px] w-[114px] shrink-0 text-[#a8a8a8] text-[18px]">龙跃黄海JH6</span>
              <span className="text-[#e00000] text-[17px]">启动点: 0.00</span>
            </div>
            <div className="absolute left-[1419px] top-[199px] w-[158px] h-[26px] bg-[#f0f0e0] border-r-2 border-b-2 border-[#a0a090] flex items-center gap-[1px] pl-[3px] pr-[3px] text-[14px] text-[#222]">
              <div className="w-[20px] h-[20px] bg-[#d4d0c8] flex items-center justify-center font-['Liberation_Serif',serif] font-bold text-[#9a0000] text-[16px]">A</div>
              <div className="w-[71px] h-[20px] bg-[#d4d0c8] flex items-center justify-center whitespace-nowrap text-[16px]">极品五笔</div>
              <div className="w-[20px] h-[20px] bg-[#d4d0c8] flex items-center justify-center">
                <svg width="14" height="14" viewBox="0 0 14 14"><path d="M8 1 A6 6 0 1 1 2 11 A6 6 0 0 0 8 1 Z" fill="#111" /></svg>
              </div>
              <div className="w-[19px] h-[20px] bg-[#d4d0c8] flex items-center justify-center">·,</div>
              <div className="w-[19px] h-[20px] bg-[#b8b8b0] flex items-center justify-center">
                <svg width="16" height="12" viewBox="0 0 16 12"><rect x="0.5" y="0.5" width="15" height="11" fill="#e8e8e8" stroke="#666" /><path d="M2 3 H14 M2 6 H14 M3 9 H13" stroke="#666" strokeDasharray="2 1" /></svg>
              </div>
            </div>
          </div>

          <div className="h-[24px] shrink-0 border-y-2 border-[#b00000] flex text-[17px] text-[#e02020]">
            <div className="w-[276px] shrink-0 border-r border-[#b00000] pl-[8px] pt-[2px] flex items-center">2021年</div>
            <div className="w-[244px] shrink-0 border-r border-[#b00000] pl-[2px] pt-[2px] flex items-center">1</div>
            <div className="w-[113px] shrink-0 pl-[4px] pt-[2px] flex items-center">2</div>
            <div className="w-[115px] shrink-0 bg-[#000080] text-[#c8c8e8] flex items-center justify-center whitespace-nowrap text-[16.5px] pt-[2px]">2022/02/18/五</div>
            <div className="w-[273px] shrink-0 border-r border-[#b00000] flex items-center" />
            <div className="w-[245px] shrink-0 border-r border-[#b00000] pl-[4px] pt-[2px] flex items-center">4</div>
            <div className="w-[244px] shrink-0 border-r border-[#b00000] pl-[4px] pt-[2px] flex items-center">5</div>
            <div className="w-[201px] shrink-0 border-r-2 border-[#b00000] pl-[4px] pt-[2px] flex items-center">6</div>
            <div className="flex-1 text-[#b0b0b0] pt-[2px] flex items-center justify-center">日线</div>
          </div>

          <div className="h-[26px] shrink-0 border-b-2 border-[#b00000] flex text-[17.5px] text-[#b8b8b8]">
            {tabs1.map(([t, w, c]) => <div key={t} style={{ width: w }} className={`shrink-0 border-r border-[#b00000] pt-[2px] flex items-center justify-center whitespace-nowrap ${t.match(/[A-Z]{2}/) ? 'text-[16px]' : ''} ${c || ''}`}>{t}</div>)}
            <div className="w-[710px] shrink-0 border-r border-[#b00000]" />
            <div className="w-[46px] shrink-0 border-r border-[#b00000] flex items-center justify-center whitespace-nowrap">请返</div>
          </div>
          <div className="h-[27px] shrink-0 border-b-2 border-[#b00000] flex text-[17.5px] text-[#b8b8b8]">
            {tabs2.map(([t, w, c]) => <div key={t} style={{ width: w }} className={`shrink-0 border-r border-[#b00000] pt-[2px] flex items-center justify-center whitespace-nowrap ${c || ''}`}>{t}</div>)}
          </div>
        </div>

        <div className="w-[337px] shrink-0 border-l-2 border-[#b00000] flex flex-col overflow-hidden text-[#b8b8b8]">
          <div className="h-[82px] shrink-0 border-b-2 border-[#a00000] flex flex-col">
            <div className="h-[43px] flex items-center pl-[52px]">
              <span className="text-[28.5px] font-bold text-[#00c8e8] w-[120px] shrink-0">宝莫股份</span>
              <span className="font-['DejaVu_Sans_Mono',monospace] font-bold text-[18px] text-[#a8a8a8] tracking-[1px] w-[79px] shrink-0">002476</span>
              <span className="font-bold text-[15px] text-[#f04040] -mt-[12px]">R</span>
            </div>
            <div className="h-[37px] flex items-center font-['DejaVu_Sans',sans-serif] font-bold text-[24px] text-[#00ec00]">
              <span className="w-[123px] shrink-0 pl-[3px]">6.78</span>
              <svg width="20" height="20" viewBox="0 0 20 20" className="shrink-0"><path d="M0 1 H20 L10 20 Z" fill="#00ec00" /></svg>
              <span className="w-[90px] shrink-0">-0.17</span>
              <span>-2.45%</span>
            </div>
          </div>
          <div className="shrink-0 h-[136px] pt-[3px]">
            {sells.map(([l, p, v], i) => (
              <div key={l} className="h-[27px] flex items-center pl-[2px]">
                <span className="w-[119px] shrink-0 text-[23px]">{l}{i === 0 && <span className="ml-[2px]">￥</span>}</span>
                <span className={`${num} text-[#00d800]`}>{p}</span>
                <span className={`${num} flex-1 text-right pr-[4px] text-[#c8c800]`}>{v}<span className="text-[22px] font-normal">万</span></span>
              </div>
            ))}
          </div>
          <div className="h-[2px] shrink-0 flex"><div className="w-[240px] bg-[#b08030]" /><div className="flex-1 bg-[#306fa0]" /></div>
          <div className="shrink-0 h-[137px] pt-[3.5px]">
            {buys.map(([l, p, v]) => (
              <div key={l} className="h-[27px] flex items-center pl-[2px]">
                <span className="w-[119px] shrink-0 text-[23px]">{l}</span>
                <span className={`${num} text-[#00d800]`}>{p}</span>
                <span className={`${num} flex-1 text-right pr-[4px] text-[#c8c800]`}>{v}<span className="text-[22px] font-normal">万</span></span>
              </div>
            ))}
          </div>
          <div className="h-[2px] shrink-0 bg-[#a00000]" />
          <div className="shrink-0 h-[144px] pt-[1px] border-b-2 border-[#a00000]">
            {stats1.map(([a, b, c1, d, e, c2, u]) => (
              <div key={a} className="h-[28.5px] flex items-center pl-[2px]">
                <span className="w-[66px] shrink-0 text-[23px]">{a}</span>
                <span className={`${num} w-[94px] shrink-0 text-right ${c1}`}>{b}</span>
                <span className="w-[80px] shrink-0 pl-[8px] text-[23px]">{d}</span>
                <span className={`${num} flex-1 text-right pr-[3px] ${c2}`}>{e}{u && <span className="text-[22px] font-normal text-[#b8b8b8]">{u}</span>}</span>
              </div>
            ))}
          </div>
          <div className="shrink-0 h-[93px] pt-[4px] border-b-2 border-[#a00000]">
            {stats2.map(([a, b, c1, d, e, c2, u]) => (
              <div key={a} className="h-[28px] flex items-center pl-[2px]">
                <span className="w-[80px] shrink-0 text-[23px] whitespace-nowrap">{a}</span>
                <span className={`${num} w-[80px] shrink-0 text-right ${c1}`}>{b}</span>
                <span className="w-[90px] shrink-0 pl-[8px] text-[22px] whitespace-nowrap">{d}</span>
                <span className={`${num} flex-1 text-right pr-[3px] ${c2}`}>{e}{u && <span className="text-[22px] font-normal text-[#b8b8b8]">{u}</span>}</span>
              </div>
            ))}
          </div>
          <div className="shrink-0 h-[120px] pt-[5px] border-b-2 border-[#a00000]">
            {flows.map(([a, w, v, p]) => (
              <div key={a} className="h-[28.3px] flex items-center pl-[2px]">
                <span className="w-[138px] shrink-0 text-[23px] whitespace-nowrap">{a}</span>
                <span className="w-[52px] shrink-0"><span style={{ width: w }} className="block h-[10px] bg-[#00e800]" /></span>
                <span className="w-[77px] shrink-0 text-right font-['DejaVu_Sans','Noto_Sans_CJK_SC',sans-serif] text-[17px] text-[#00d800] whitespace-nowrap">{v}<span className="text-[22px]">万</span></span>
                <span className="flex-1 text-right pr-[3px] font-['DejaVu_Sans',sans-serif] text-[19px] text-[#00d800]">{p}</span>
              </div>
            ))}
          </div>
          <div className="shrink-0 pt-[5px]">
            {trades.map(([t, p, v, s, n], i) => (
              <div key={i} className="h-[27px] flex items-center pl-[1px]">
                <span className={`${num} w-[115px] shrink-0 text-[#b0b0b0]`}>{t}</span>
                <span className={`${num} w-[50px] shrink-0 text-[#00d800]`}>{p}</span>
                <span className={`${num} w-[86px] shrink-0 text-right whitespace-nowrap ${s ? 'text-[#c8c800]' : 'text-[#c000c8]'}`}>{v}<span className="text-[22px] font-normal">万</span></span>
                <span className={`font-['DejaVu_Sans',sans-serif] font-bold text-[18px] w-[45px] shrink-0 text-center ${s === 'B' ? 'text-[#ff2020]' : 'text-[#00d800]'}`}>{s}</span>
                <span className={`${num} flex-1 text-right pr-[5px] text-[#8c8c8c]`}>{n}</span>
              </div>
            ))}
          </div>
        </div>

        <div className="flex-1 bg-[#f0f0f0] border-l-2 border-[#c8c8c8] flex flex-col items-center text-[#1c4aa0]">
          {railIcons.map((r, i) => <div key={i} style={{ height: r.h }} className="w-full shrink-0 flex items-center justify-center">{r.el}</div>)}
          <div className="h-[2px] shrink-0" />
          {railText.map(t => (
            <div key={t} className={`w-full h-[34.55px] shrink-0 flex items-center justify-center text-[16px] ${t === '日' ? 'bg-[#f8f8f8] border-t border-l border-[#b0b0b0]' : ''}`}>{t}</div>
          ))}
        </div>
      </div>

      <div className="h-[36px] shrink-0 bg-[#f0f0f0] flex items-center pt-[2px] text-[20px] tracking-[0.4px]">
        <svg width="22" height="24" viewBox="0 0 22 24" className="ml-[1px] mr-[2px] shrink-0">
          <rect x="1" y="1" width="20" height="22" rx="2" fill="#f0c040" stroke="#c08820" />
          <rect x="5" y="6" width="12" height="10" fill="#fff0b0" stroke="#c08820" />
        </svg>
        <span className="w-[55px] shrink-0 text-[22px] text-[#222]">上证</span>
        {status.map(([t, w, c, u]) => (
          <span key={t} style={{ width: w }} className={`shrink-0 whitespace-nowrap ${c}`}>{t}{u && <span className="text-[22px]">{u}</span>}</span>
        ))}
        <span className="h-[32px] w-[6px] shrink-0 border-l-2 border-[#b0b0b0]" />
        <span className="w-[84px] shrink-0 text-[22px] text-[#222]">总成交</span>
        <span className="text-[#111]">1</span>
      </div>

      <div className="absolute left-[1360px] top-[1314px] w-[800px] h-[81px] bg-[linear-gradient(#7fa8d6,#8ab0e0)] flex items-center pl-[17px] overflow-hidden">
        <span className="text-[55px] leading-none font-bold text-[#1a1a90] whitespace-nowrap w-[282px] shrink-0">公式指标网</span>
        <svg width="84" height="84" viewBox="0 0 84 84" className="shrink-0 ml-[21px]">
          <path d="M8 46 A34 34 0 0 1 76 34" fill="none" stroke="#d2644e" strokeWidth="9" />
          <path d="M76 44 A34 34 0 0 1 44 76" fill="none" stroke="#ecca48" strokeWidth="9" />
          <path d="M8 52 A34 34 0 0 0 30 74" fill="none" stroke="#5a8ac8" strokeWidth="6" />
          <path d="M24 22 H60 V38 H24 Z M30 44 H54 V52 H30 Z M37 2 H47 V80 H37 Z M22 58 H62 V66 H22 Z" fill="#ecca48" />
          <path d="M36 1 H48 V9 L42 13 L36 9 Z" fill="#b0553c" />
        </svg>
        <span className="ml-[23px] font-['DejaVu_Serif',serif] font-bold text-[49px] leading-none text-white whitespace-nowrap">www.9m8.cn</span>
      </div>
    </div>
  );
}
